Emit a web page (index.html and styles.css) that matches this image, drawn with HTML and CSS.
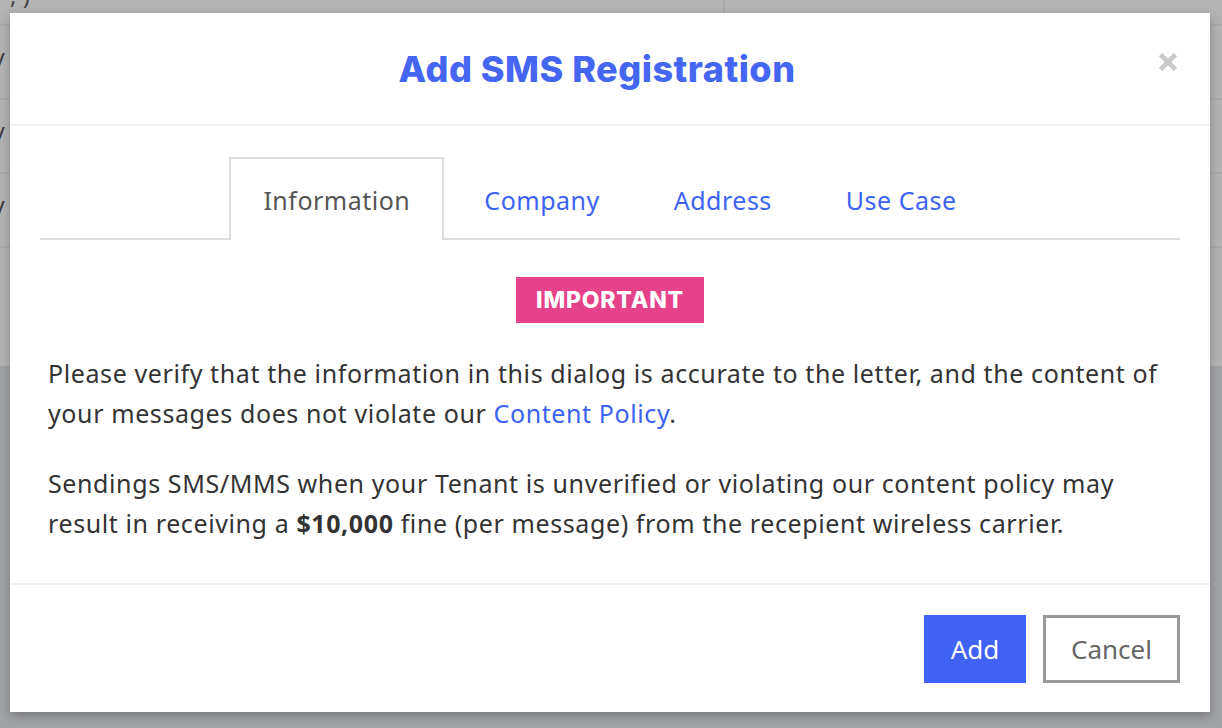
FILE: index.html
```html
<!DOCTYPE html>
<html>
<head>
<meta charset="utf-8">
<link rel="stylesheet" href="styles.css">
</head>
<body>
<div class="page">
  <div class="table">
    <div class="row row-top"><span class="frag">, )</span><span class="vline"></span></div>
    <div class="row"><span class="slash">/</span></div>
    <div class="row"><span class="slash">/</span></div>
    <div class="row"><span class="slash">/</span></div>
    <div class="row row-last"></div>
  </div>
</div>
<div class="modal">
  <div class="modal-header">
    <h1 class="title">Add SMS Registration</h1>
    <button class="close" aria-label="Close">
      <svg width="20" height="20" viewBox="0 0 20 20"><path d="M2.5 2.5 L17.5 17.5 M17.5 2.5 L2.5 17.5" stroke="#c9c9c9" stroke-width="4.6" fill="none"/></svg>
    </button>
  </div>
  <div class="modal-body">
    <div class="tabs">
      <div class="tab active">Information</div>
      <div class="tab">Company</div>
      <div class="tab">Address</div>
      <div class="tab">Use Case</div>
    </div>
    <div class="badge-wrap"><span class="badge">IMPORTANT</span></div>
    <p class="text">Please verify that the information in this dialog is accurate to the letter, and the content of your messages does not violate our <a class="link" href="#">Content Policy</a>.</p>
    <p class="text">Sendings SMS/MMS when your Tenant is unverified or violating our content policy may result in receiving a <b>$10,000</b> fine (per message) from the recepient wireless carrier.</p>
  </div>
  <div class="modal-footer">
    <button class="btn btn-primary">Add</button>
    <button class="btn btn-outline">Cancel</button>
  </div>
</div>
</body>
</html>
```
FILE: styles.css
```css
* { box-sizing: border-box; }
html, body { margin: 0; padding: 0; }
body {
  width: 1222px;
  height: 728px;
  overflow: hidden;
  background: #a1a2a6;
  font-family: "Noto Sans", "Liberation Sans", sans-serif;
  position: relative;
}
.page { width: 100%; }
.table { background: #b3b3b3; }
.row {
  height: 74px;
  border-bottom: 2px solid #a9a9a9;
  position: relative;
  color: #444;
  font-size: 24px;
}
.row-top { height: 26px; }
.row-last { height: 118px; border-bottom: none; }
.frag { position: absolute; left: 10px; top: -22px; }
.vline { position: absolute; left: 723px; top: 0; width: 2px; height: 26px; background: #a9a9a9; }
.slash { position: absolute; left: -4px; top: 18px; color: #3a3a3a; }

.modal {
  position: absolute;
  left: 10px;
  top: 13px;
  width: 1200px;
  height: 699px;
  background: #fff;
  box-shadow: 0 4px 10px rgba(0,0,0,0.25);
  display: flex;
  flex-direction: column;
}
.modal-header {
  height: 113px;
  border-bottom: 2px solid #f0f0f0;
  display: flex;
  align-items: center;
  justify-content: center;
  padding-right: 26px;
  position: relative;
}
.title {
  margin: 0;
  font-family: "Inter", sans-serif;
  font-weight: 800;
  font-size: 36px;
  letter-spacing: 0.5px;
  color: #4466f2;
}
.close {
  position: absolute;
  right: 32px;
  top: 39px;
  width: 20px;
  height: 20px;
  padding: 0;
  border: none;
  background: transparent;
  display: flex;
}
.modal-body {
  padding: 31px 30px 0;
  flex: 1;
}
.tabs {
  display: flex;
  justify-content: center;
  gap: 6px;
  border-bottom: 2px solid #dddddd;
  height: 83px;
}
.tab {
  padding: 0 32px;
  height: 83px;
  display: flex;
  align-items: center;
  font-size: 25px;
  letter-spacing: 0.5px;
  color: #3d63f5;
  border: 2px solid transparent;
  border-bottom: none;
}
.tab.active {
  color: #555;
  border-color: #dddddd;
  background: #fff;
}
.badge-wrap {
  display: flex;
  justify-content: center;
  margin-top: 37px;
}
.badge {
  background: #e6428a;
  color: #fff;
  font-family: "Inter", sans-serif;
  font-weight: 800;
  font-size: 23px;
  height: 46px;
  width: 188px;
  display: flex;
  align-items: center;
  justify-content: center;
  letter-spacing: 0.8px;
}
.text {
  margin: 30px 0 0;
  padding: 0 8px;
  font-size: 25px;
  letter-spacing: 0.6px;
  line-height: 40px;
  color: #333;
}
.text b { font-weight: 700; }
.link { color: #3d63f5; text-decoration: none; }
.modal-footer {
  height: 129px;
  border-top: 2px solid #f0f0f0;
  display: flex;
  justify-content: flex-end;
  align-items: flex-start;
  padding: 30px 30px 0;
  gap: 17px;
}
.btn {
  height: 68px;
  font-family: "Noto Sans", sans-serif;
  font-size: 26px;
  padding: 0;
  cursor: pointer;
}
.btn-primary {
  width: 102px;
  background: #4163f5;
  color: #fff;
  border: none;
}
.btn-outline {
  width: 137px;
  background: #fff;
  color: #666;
  border: 3px solid #999;
}
```
